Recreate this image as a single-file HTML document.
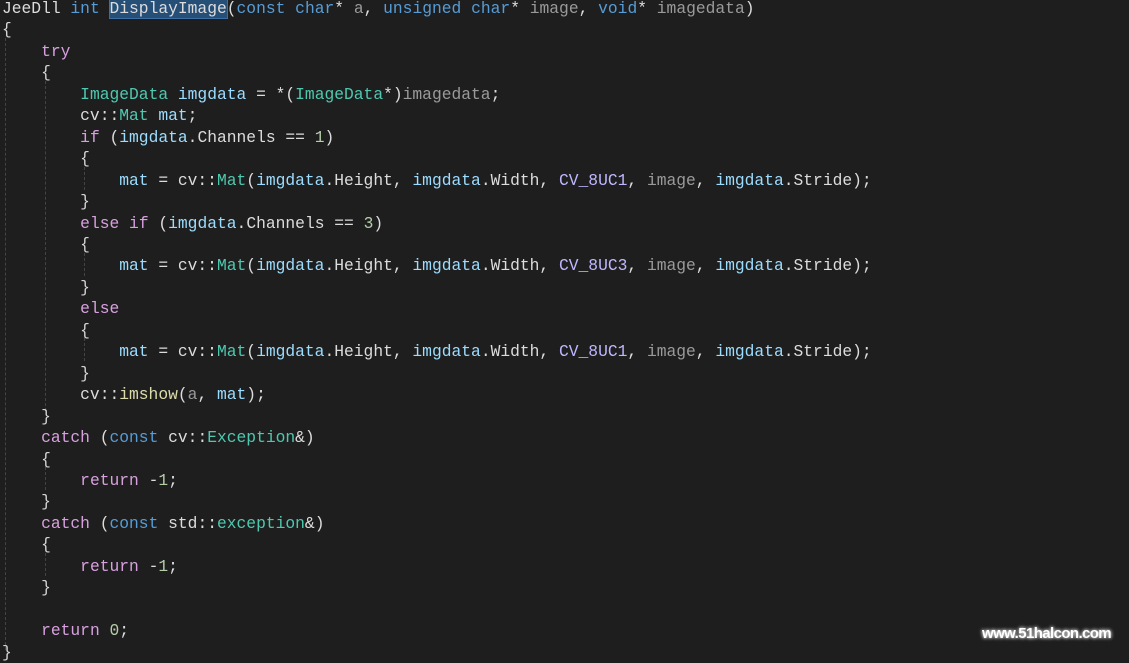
<!DOCTYPE html>
<html><head><meta charset="utf-8"><style>
body{margin:0;background:#1e1e1e;width:1129px;height:654px;overflow:hidden;position:relative}
pre{margin:0;position:absolute;left:2px;top:-2px;font-family:"Liberation Mono",monospace;font-size:16.3px;line-height:21.45px;color:#dcdcdc;letter-spacing:0}
.k{color:#569cd6}.c{color:#d8a0df}.t{color:#4ec9b0}.v{color:#9cdcfe}.p{color:#9a9a9a}.n{color:#b5cea8}.m{color:#beb7ff}.f{color:#dcdcaa}
.b1,.b2,.b3{color:#d4d4d4}
.sel{background:#264f78;outline:1px solid #3a6ea5}
.g{position:absolute;width:0;border-left:1px dashed #444}
.wm{position:absolute;left:982px;top:625px;font-family:"Liberation Sans",sans-serif;font-weight:bold;font-size:15px;letter-spacing:-0.6px;color:#fff;text-shadow:0 0 3px #fff,0 0 5px #888}
</style></head><body>
<div class="g" style="left:5px;top:38px;height:612px"></div>
<div class="g" style="left:45px;top:81px;height:330px"></div>
<div class="g" style="left:45px;top:467px;height:23px"></div>
<div class="g" style="left:45px;top:553px;height:23px"></div>
<div class="g" style="left:84px;top:167px;height:23px"></div>
<div class="g" style="left:84px;top:253px;height:23px"></div>
<div class="g" style="left:84px;top:338px;height:23px"></div>
<pre>JeeDll <span class="k">int</span> <span class="sel">DisplayImage</span>(<span class="k">const</span> <span class="k">char</span>* <span class="p">a</span>, <span class="k">unsigned</span> <span class="k">char</span>* <span class="p">image</span>, <span class="k">void</span>* <span class="p">imagedata</span>)
<span class="b1">{</span>
    <span class="c">try</span>
    <span class="b2">{</span>
        <span class="t">ImageData</span> <span class="v">imgdata</span> = *(<span class="t">ImageData</span>*)<span class="p">imagedata</span>;
        cv::<span class="t">Mat</span> <span class="v">mat</span>;
        <span class="c">if</span> (<span class="v">imgdata</span>.Channels == <span class="n">1</span>)
        <span class="b3">{</span>
            <span class="v">mat</span> = cv::<span class="t">Mat</span>(<span class="v">imgdata</span>.Height, <span class="v">imgdata</span>.Width, <span class="m">CV_8UC1</span>, <span class="p">image</span>, <span class="v">imgdata</span>.Stride);
        <span class="b3">}</span>
        <span class="c">else</span> <span class="c">if</span> (<span class="v">imgdata</span>.Channels == <span class="n">3</span>)
        <span class="b3">{</span>
            <span class="v">mat</span> = cv::<span class="t">Mat</span>(<span class="v">imgdata</span>.Height, <span class="v">imgdata</span>.Width, <span class="m">CV_8UC3</span>, <span class="p">image</span>, <span class="v">imgdata</span>.Stride);
        <span class="b3">}</span>
        <span class="c">else</span>
        <span class="b3">{</span>
            <span class="v">mat</span> = cv::<span class="t">Mat</span>(<span class="v">imgdata</span>.Height, <span class="v">imgdata</span>.Width, <span class="m">CV_8UC1</span>, <span class="p">image</span>, <span class="v">imgdata</span>.Stride);
        <span class="b3">}</span>
        cv::<span class="f">imshow</span>(<span class="p">a</span>, <span class="v">mat</span>);
    <span class="b2">}</span>
    <span class="c">catch</span> (<span class="k">const</span> cv::<span class="t">Exception</span>&amp;)
    <span class="b2">{</span>
        <span class="c">return</span> -<span class="n">1</span>;
    <span class="b2">}</span>
    <span class="c">catch</span> (<span class="k">const</span> std::<span class="t">exception</span>&amp;)
    <span class="b2">{</span>
        <span class="c">return</span> -<span class="n">1</span>;
    <span class="b2">}</span>

    <span class="c">return</span> <span class="n">0</span>;
<span class="b1">}</span></pre>
<div class="wm">www.51halcon.com</div>
</body></html>
